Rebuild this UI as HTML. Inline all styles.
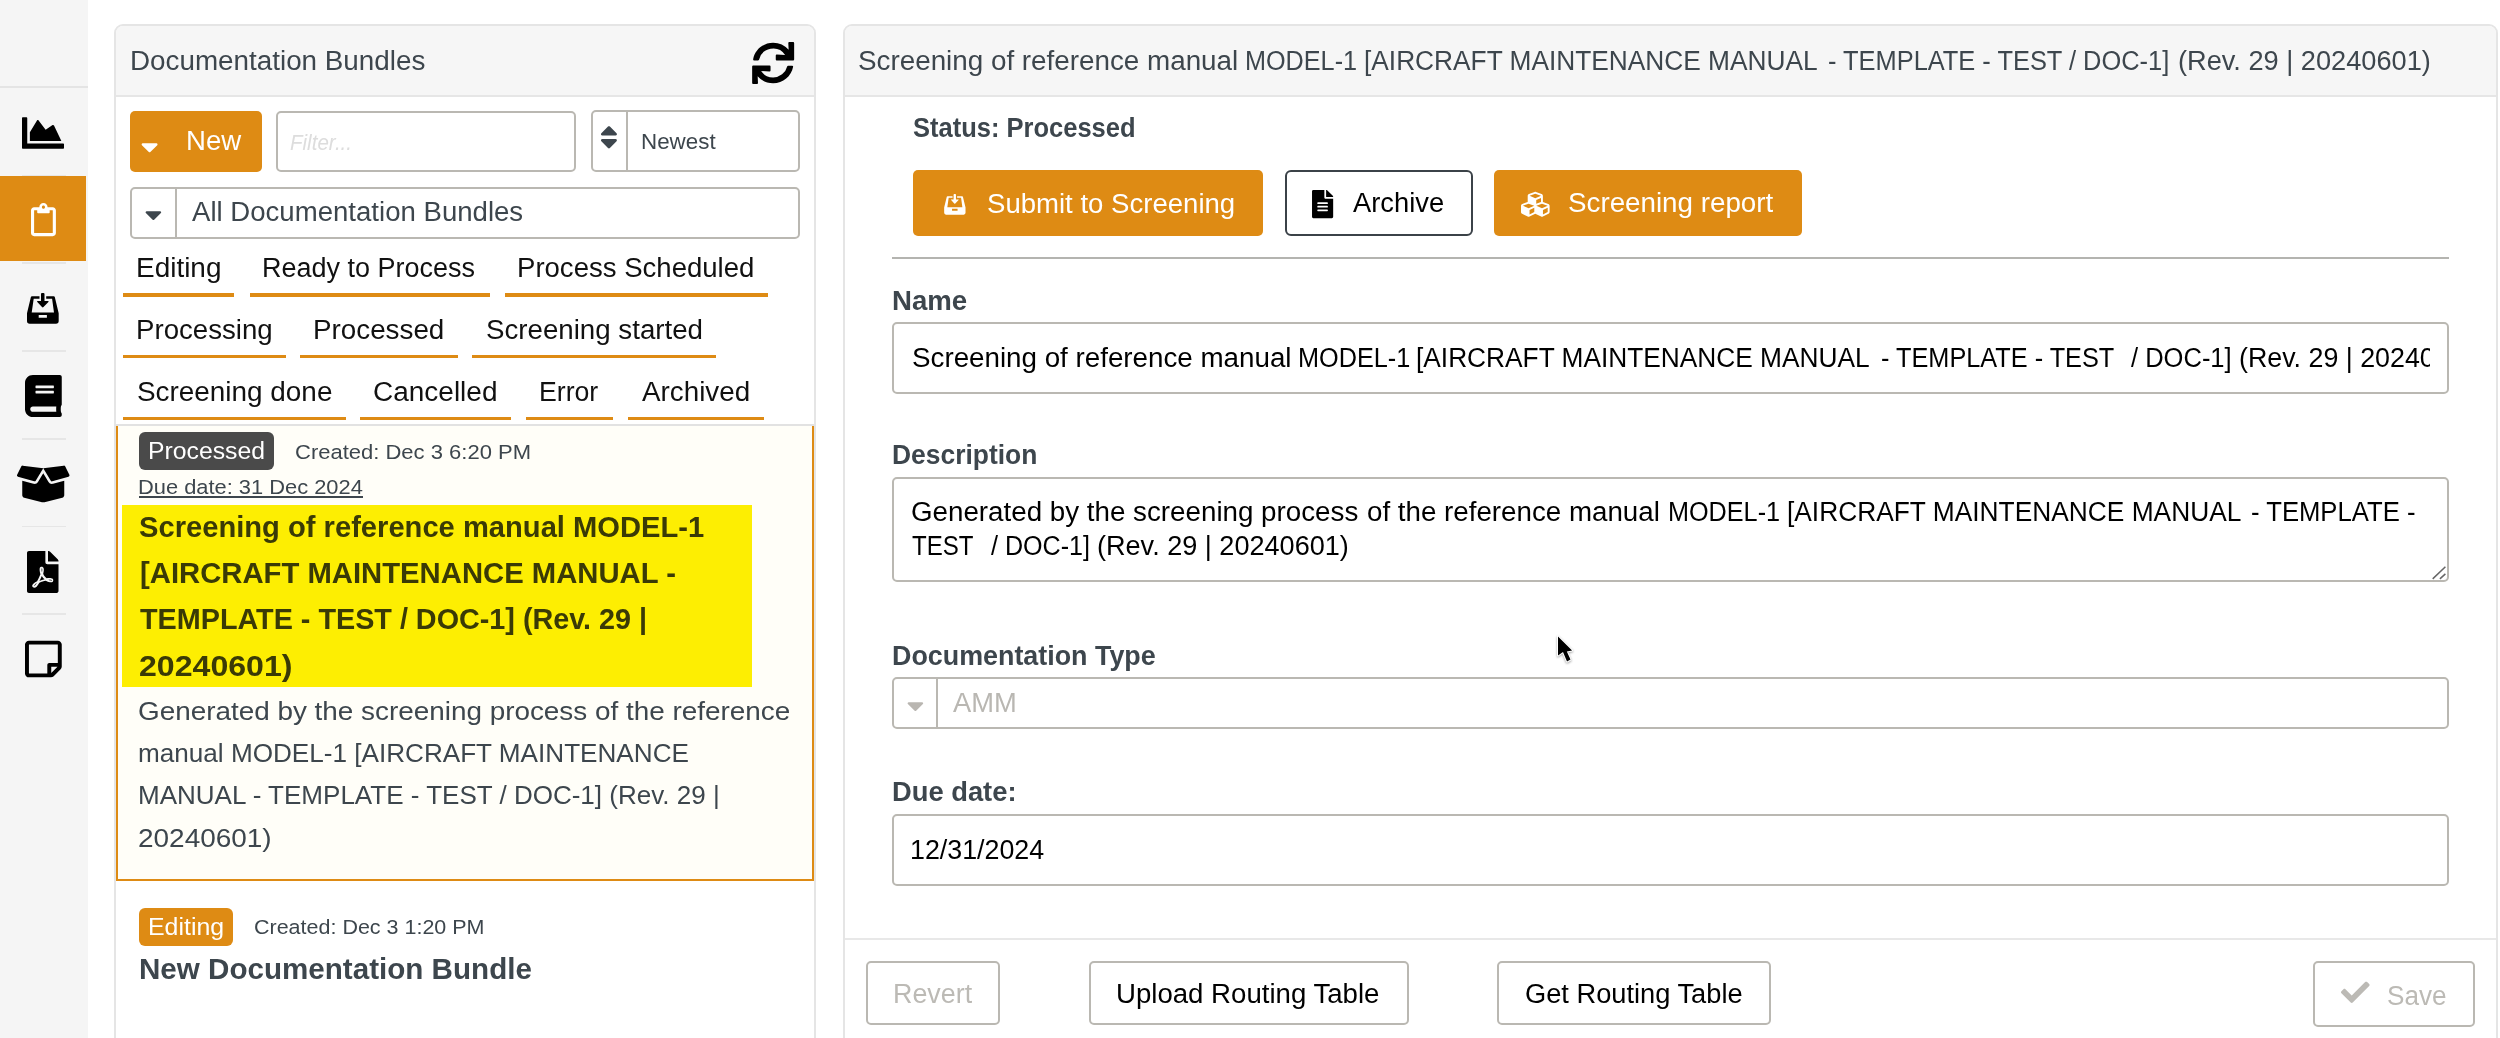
<!DOCTYPE html>
<html lang="en"><head><meta charset="utf-8"><title>Documentation Bundles</title><style>
html,body{margin:0;padding:0;background:#fff}
body{width:2500px;height:1038px;overflow:hidden;font-family:"Liberation Sans",sans-serif}
.root{position:relative;width:2500px;height:1038px;overflow:hidden;background:#fff}
.b{position:absolute}
.i{position:absolute;display:block;overflow:visible}
.t{position:absolute;white-space:pre;line-height:1;transform-origin:0 0;display:block}
.clip{position:absolute;overflow:hidden}
.tx{position:absolute;left:0;top:0;width:2500px;height:1038px;will-change:transform}
</style></head><body>
<div class="root">
<div class="b" style="left:0px;top:0px;width:88.00px;height:1038.00px;background:#f5f5f5"></div>
<div class="b" style="left:0px;top:86px;width:88.00px;height:1.50px;background:#e4e4e4"></div>
<div class="b" style="left:22px;top:174.5px;width:44.00px;height:1.50px;background:#e6e6e6"></div>
<div class="b" style="left:22px;top:262.2px;width:44.00px;height:1.50px;background:#e6e6e6"></div>
<div class="b" style="left:22px;top:350px;width:44.00px;height:1.50px;background:#e6e6e6"></div>
<div class="b" style="left:22px;top:438px;width:44.00px;height:1.50px;background:#e6e6e6"></div>
<div class="b" style="left:22px;top:525.7px;width:44.00px;height:1.50px;background:#e6e6e6"></div>
<div class="b" style="left:22px;top:613.4px;width:44.00px;height:1.50px;background:#e6e6e6"></div>
<div class="b" style="left:0px;top:175.8px;width:86.00px;height:85.60px;background:#de8b14"></div>
<svg class="i" style="left:22px;top:111.55px" width="42" height="42" viewBox="0 0 512 512" ><path fill="#000" d="M500 384c6.600 0 12 5.400 12 12v40c0 6.600-5.400 12-12 12H12c-6.600 0-12-5.400-12-12V76c0-6.600 5.400-12 12-12h40c6.600 0 12 5.400 12 12v308h436zM372.700 159.500L288 216l-85.300-113.700c-5.100-6.800-15.500-6.300-19.900 1L96 248v104h384l-89.900-187.800c-3.200-6.500-11.400-8.700-17.400-4.700z"/></svg>
<svg class="i" style="left:30.6px;top:202.7px" width="24.9" height="33.2" viewBox="0 0 384 512" ><path fill="#fff" d="M336 64h-80c0-35.300-28.700-64-64-64s-64 28.700-64 64H48C21.500 64 0 85.500 0 112v352c0 26.500 21.500 48 48 48h288c26.500 0 48-21.500 48-48V112c0-26.500-21.500-48-48-48zM192 40c13.300 0 24 10.700 24 24s-10.700 24-24 24-24-10.700-24-24 10.700-24 24-24zm144 418c0 3.300-2.700 6-6 6H54c-3.300 0-6-2.700-6-6V118c0-3.300 2.700-6 6-6h42v36c0 6.600 5.400 12 12 12h168c6.600 0 12-5.400 12-12v-36h42c3.300 0 6 2.700 6 6z"/></svg>
<svg class="i" style="left:27.2px;top:292.9px" width="31.7" height="30.7" viewBox="0 0 31.7 30.7"><path fill="#000" fill-rule="evenodd" d="M5 3.200H12.500V5.700H6.700L4.700 19.600H27L25.100 5.700H19.200V3.200H26.700Q27.600 3.200 27.800 4.100L31.700 20.200V28Q31.700 30.700 29 30.700H2.700Q0 30.700 0 28V20.200L3.900 4.100Q4.100 3.200 5 3.200ZM11.700 21.900H19.900V24.800H11.700Z"/><path fill="#000" d="M14 1Q14 0 15 0H16.500Q17.500 0 17.500 1V8.100H21Q22.200 8.100 21.400 9L16.500 14Q15.750 14.800 15 14L10.300 9Q9.500 8.100 10.700 8.100H14Z"/></svg>
<svg class="i" style="left:24.7px;top:374.8px" width="36.75" height="42" viewBox="0 0 448 512" ><path fill="#000" d="M448 360V24c0-13.300-10.700-24-24-24H96C43 0 0 43 0 96v320c0 53 43 96 96 96h328c13.300 0 24-10.700 24-24v-16c0-7.500-3.500-14.300-8.900-18.700-4.200-15.400-4.200-59.300 0-74.700 5.400-4.300 8.900-11.100 8.900-18.600zM128 134c0-3.300 2.700-6 6-6h212c3.300 0 6 2.700 6 6v20c0 3.300-2.700 6-6 6H134c-3.300 0-6-2.700-6-6v-20zm0 64c0-3.300 2.700-6 6-6h212c3.300 0 6 2.700 6 6v20c0 3.300-2.700 6-6 6H134c-3.300 0-6-2.700-6-6v-20zm253.400 250H96c-17.700 0-32-14.300-32-32 0-17.600 14.400-32 32-32h285.400c-1.900 17.100-1.900 46.900 0 64z"/></svg>
<svg class="i" style="left:16.5px;top:462.6px" width="52.5" height="42" viewBox="0 0 640 512" ><path fill="#000" d="M425.700 256c-16.900 0-32.800-9-41.400-23.400L320 126l-64.200 106.600c-8.700 14.500-24.600 23.500-41.500 23.500-4.500 0-9-.6-13.300-1.900L64 215v178c0 14.700 10 27.500 24.200 31l216.200 54.100c10.200 2.500 20.900 2.500 31 0L551.800 424c14.200-3.600 24.200-16.400 24.200-31V215l-137 39.100c-4.300 1.300-8.800 1.900-13.300 1.900zm212.600-112.200L586.800 41c-3.100-6.200-9.800-9.800-16.700-8.900L320 64l91.700 152.100c3.800 6.300 11.400 9.300 18.500 7.300l197.900-56.500c9.900-2.900 14.700-13.900 10.200-23.100zM53.200 41L1.700 143.800c-4.600 9.200.3 20.200 10.100 23l197.900 56.500c7.100 2 14.700-1 18.500-7.300L320 64 69.800 32.100c-6.900-.8-13.500 2.700-16.600 8.900z"/></svg>
<svg class="i" style="left:27.3px;top:550.6px" width="31.5" height="42" viewBox="0 0 384 512" ><path fill="#000" d="M181.900 256.100c-5-16-4.900-46.900-2-46.900 8.400 0 7.600 36.900 2 46.900zm-1.700 47.200c-7.700 20.200-17.300 43.300-28.400 62.700 18.300-7 39-17.200 62.900-21.900-12.700-9.600-24.900-23.400-34.500-40.800zM86.100 428.100c0 .8 13.200-5.400 34.900-40.200-6.700 6.300-29.100 24.500-34.900 40.200zM248 160h136v328c0 13.300-10.700 24-24 24H24c-13.300 0-24-10.700-24-24V24C0 10.700 10.700 0 24 0h200v136c0 13.200 10.800 24 24 24zm-8 171.800c-20-12.200-33.300-29-42.700-53.800 4.500-18.500 11.600-46.600 6.200-64.200-4.700-29.400-42.400-26.500-47.800-6.800-5 18.300-.4 44.100 8.100 77-11.600 27.600-28.700 64.600-40.800 85.800-.1 0-.1.100-.2.100-27.100 13.900-73.600 44.500-54.500 68 5.600 6.900 16 10 21.500 10 17.900 0 35.700-18 61.100-61.800 25.800-8.500 54.100-19.100 79-23.200 21.700 11.800 47.100 19.500 64 19.500 29.200 0 31.200-32 19.700-43.400-13.900-13.600-54.300-9.700-73.600-7.200zM377 105L279 7c-4.500-4.500-10.600-7-17-7h-6v128h128v-6.100c0-6.300-2.500-12.400-7-16.900zm-74.100 255.300c4.100-2.700-2.500-11.900-42.800-9 37.100 15.800 42.800 9 42.800 9z"/></svg>
<svg class="i" style="left:24.7px;top:638.3px" width="36.75" height="42" viewBox="0 0 448 512" ><path fill="#000" d="M448 348.106V80c0-26.510-21.490-48-48-48H48C21.490 32 0 53.490 0 80v351.988c0 26.510 21.490 48 48 48h268.118a48 48 0 0 0 33.941-14.059l83.882-83.882A48 48 0 0 0 448 348.106zm-128 80v-76.118h76.118L320 428.106zM400 80v223.988H296c-13.255 0-24 10.745-24 24v104H48V80h352z"/></svg>
<div class="b" style="left:114px;top:24px;width:702.00px;height:1076.00px;border:2px solid #e5e5e5;border-radius:9px;box-sizing:border-box;background:#fff"></div>
<div class="b" style="left:116px;top:26px;width:698.00px;height:69.00px;background:#f6f6f6;border-radius:7px 7px 0 0"></div>
<div class="b" style="left:116px;top:95px;width:698.00px;height:2.00px;background:#e6e6e6"></div>
<svg class="i" style="left:751.5px;top:42px" width="42.3" height="42" viewBox="0 0 512 512" ><path fill="#000" d="M440.650 12.570l4 82.770A247.160 247.160 0 0 0 255.830 8C134.730 8 33.910 94.920 12.290 209.820A12 12 0 0 0 24.090 224h49.050a12 12 0 0 0 11.670-9.260 175.910 175.910 0 0 1 317-56.940l-101.460-4.860a12 12 0 0 0-12.570 12v47.410a12 12 0 0 0 12 12H500a12 12 0 0 0 12-12V12a12 12 0 0 0-12-12h-47.370a12 12 0 0 0-11.980 12.570zM255.830 432a175.610 175.610 0 0 1-146-77.800l101.800 4.870a12 12 0 0 0 12.570-12v-47.400a12 12 0 0 0-12-12H12a12 12 0 0 0-12 12V500a12 12 0 0 0 12 12h47.350a12 12 0 0 0 12-12.600l-4.150-82.570A247.170 247.170 0 0 0 255.830 504c121.110 0 221.930-86.920 243.550-201.820a12 12 0 0 0-11.800-14.180h-49.050a12 12 0 0 0-11.670 9.260A175.860 175.860 0 0 1 255.830 432z"/></svg>
<div class="b" style="left:130px;top:110.6px;width:131.60px;height:61.40px;background:#de8b14;border-radius:5px"></div>
<svg class="i" style="left:140.6px;top:132.5px" width="17.2" height="27.5" viewBox="0 0 320 512" ><path fill="#fff" d="M31.300 192h257.300c17.800 0 26.700 21.500 14.100 34.100L174.100 354.800c-7.800 7.800-20.500 7.800-28.300 0L17.200 226.100C4.600 213.500 13.500 192 31.300 192z"/></svg>
<div class="b" style="left:275.8px;top:110.6px;width:300.00px;height:61.40px;border:2px solid #bab8b2;border-radius:5px;box-sizing:border-box;background:#fff"></div>
<div class="b" style="left:591px;top:110.4px;width:209.20px;height:61.80px;border:2px solid #bab8b2;border-radius:5px;box-sizing:border-box;background:#fff"></div>
<div class="b" style="left:626px;top:111px;width:2.00px;height:60.00px;background:#bab8b2"></div>
<svg class="i" style="left:599.8px;top:123.2px" width="17.9" height="28.6" viewBox="0 0 320 512" ><path fill="#3d464d" d="M41 288h238c21.400 0 32.100 25.900 17 41L177 448c-9.400 9.400-24.600 9.400-33.900 0L24 329c-15.100-15.100-4.400-41 17-41zm255-105L177 64c-9.400-9.400-24.600-9.400-33.900 0L24 183c-15.100 15.100-4.400 41 17 41h238c21.400 0 32.100-25.900 17-41z"/></svg>
<div class="b" style="left:130px;top:186.5px;width:670.20px;height:52.00px;border:2px solid #bab8b2;border-radius:5px;box-sizing:border-box;background:#fff"></div>
<div class="b" style="left:174.8px;top:187px;width:2.00px;height:50.50px;background:#bab8b2"></div>
<svg class="i" style="left:144.6px;top:200.6px" width="16.8" height="27" viewBox="0 0 320 512" ><path fill="#3d464d" d="M31.300 192h257.300c17.800 0 26.700 21.500 14.100 34.100L174.100 354.800c-7.800 7.800-20.500 7.800-28.300 0L17.200 226.100C4.600 213.500 13.500 192 31.300 192z"/></svg>
<div class="b" style="left:122.9px;top:293.09999999999997px;width:111.60px;height:3.60px;background:#de8b14"></div>
<div class="b" style="left:249.5px;top:293.09999999999997px;width:240.00px;height:3.60px;background:#de8b14"></div>
<div class="b" style="left:504.5px;top:293.09999999999997px;width:263.60px;height:3.60px;background:#de8b14"></div>
<div class="b" style="left:122.9px;top:354.9px;width:162.90px;height:3.60px;background:#de8b14"></div>
<div class="b" style="left:300.0px;top:354.9px;width:157.50px;height:3.60px;background:#de8b14"></div>
<div class="b" style="left:471.9px;top:354.9px;width:244.20px;height:3.60px;background:#de8b14"></div>
<div class="b" style="left:122.9px;top:416.7px;width:223.10px;height:3.60px;background:#de8b14"></div>
<div class="b" style="left:359.7px;top:416.7px;width:151.40px;height:3.60px;background:#de8b14"></div>
<div class="b" style="left:526.1px;top:416.7px;width:86.80px;height:3.60px;background:#de8b14"></div>
<div class="b" style="left:627.5px;top:416.7px;width:136.40px;height:3.60px;background:#de8b14"></div>
<div class="b" style="left:116px;top:424px;width:698.00px;height:1.50px;background:#e2e2e2"></div>
<div class="b" style="left:116px;top:425.5px;width:698.00px;height:455.70px;background:#fffef8;border:2px solid #de8b14;border-top:0;box-sizing:border-box"></div>
<div class="b" style="left:138.6px;top:432px;width:135.00px;height:38.40px;background:#4a4a4a;border-radius:6px"></div>
<div class="b" style="left:139.4px;top:496px;width:223.60px;height:2.00px;background:#3d464d"></div>
<div class="b" style="left:122px;top:504.6px;width:630.40px;height:182.00px;background:#fdee02"></div>
<div class="b" style="left:138.6px;top:908px;width:94.80px;height:37.60px;background:#de8b14;border-radius:6px"></div>
<div class="b" style="left:843px;top:24px;width:1655.00px;height:1076.00px;border:2px solid #e5e5e5;border-radius:9px;box-sizing:border-box;background:#fff"></div>
<div class="b" style="left:845px;top:26px;width:1651.00px;height:69.00px;background:#f6f6f6;border-radius:7px 7px 0 0"></div>
<div class="b" style="left:845px;top:95px;width:1651.00px;height:2.00px;background:#e6e6e6"></div>
<div class="b" style="left:913px;top:170px;width:350.00px;height:66.00px;background:#de8b14;border-radius:5px"></div>
<svg class="i" style="left:944px;top:194.3px" width="21.7" height="20.7" viewBox="0 0 31.7 30.7"><path fill="#fff" fill-rule="evenodd" d="M5 3.200H12.500V5.700H6.700L4.700 19.600H27L25.100 5.700H19.200V3.200H26.700Q27.600 3.200 27.800 4.100L31.700 20.200V28Q31.700 30.700 29 30.700H2.700Q0 30.700 0 28V20.200L3.900 4.100Q4.100 3.200 5 3.200ZM11.700 21.900H19.900V24.800H11.700Z"/><path fill="#fff" d="M14 1Q14 0 15 0H16.500Q17.500 0 17.500 1V8.100H21Q22.200 8.100 21.400 9L16.500 14Q15.750 14.800 15 14L10.300 9Q9.500 8.100 10.700 8.100H14Z"/></svg>
<div class="b" style="left:1285px;top:170px;width:188.00px;height:66.00px;border:2px solid #3b4248;border-radius:6px;box-sizing:border-box;background:#fff"></div>
<svg class="i" style="left:1312.4px;top:190.4px" width="21.2" height="28.2" viewBox="0 0 384 512" ><path fill="#000" d="M224 136V0H24C10.700 0 0 10.700 0 24v464c0 13.300 10.700 24 24 24h336c13.300 0 24-10.700 24-24V160H248c-13.200 0-24-10.800-24-24zm64 236c0 6.600-5.400 12-12 12H108c-6.600 0-12-5.400-12-12v-8c0-6.600 5.400-12 12-12h168c6.600 0 12 5.400 12 12v8zm0-64c0 6.600-5.400 12-12 12H108c-6.600 0-12-5.400-12-12v-8c0-6.600 5.400-12 12-12h168c6.600 0 12 5.400 12 12v8zm0-72v8c0 6.600-5.400 12-12 12H108c-6.600 0-12-5.400-12-12v-8c0-6.600 5.400-12 12-12h168c6.600 0 12 5.400 12 12zm96-114.100v6.100H256V0h6.100c6.400 0 12.500 2.500 17 7l97.900 98c4.500 4.500 7 10.600 7 16.900z"/></svg>
<div class="b" style="left:1494px;top:170px;width:308.00px;height:66.00px;background:#de8b14;border-radius:5px"></div>
<svg class="i" style="left:1521.4px;top:190.2px" width="28.6" height="28.6" viewBox="0 0 512 512" ><path fill="#fff" d="M488.600 250.200L392 214V105.500c0-15-9.300-28.400-23.400-33.700l-100-37.500c-8.100-3.100-17.100-3.100-25.300 0l-100 37.500c-14.100 5.300-23.400 18.700-23.400 33.700V214l-96.600 36.200C9.300 255.500 0 268.900 0 283.900V394c0 13.600 7.700 26.100 19.900 32.200l100 50c10.100 5.100 22.100 5.100 32.200 0l103.900-52 103.900 52c10.100 5.100 22.100 5.100 32.200 0l100-50c12.200-6.100 19.900-18.600 19.900-32.200V283.900c0-15-9.300-28.400-23.400-33.700zM358 214.800l-85 31.900v-68.200l85-37v73.300zM154 104.100l102-38.200 102 38.200v.6l-102 41.400-102-41.400v-.6zm84 291.100l-85 42.500v-79.100l85-38.800v75.400zm0-112l-102 41.400-102-41.400v-.6l102-38.200 102 38.200v.6zm240 112l-85 42.500v-79.100l85-38.800v75.400zm0-112l-102 41.400-102-41.400v-.6l102-38.200 102 38.200v.6z"/></svg>
<div class="b" style="left:892px;top:257px;width:1557.00px;height:2.00px;background:#b4b4b0"></div>
<div class="b" style="left:892px;top:322px;width:1557.00px;height:72.00px;border:2px solid #bab8b2;border-radius:5px;box-sizing:border-box;background:#fff"></div>
<div class="b" style="left:892px;top:477px;width:1557.00px;height:105.00px;border:2px solid #bab8b2;border-radius:5px;box-sizing:border-box;background:#fff"></div>
<svg class="i" style="left:2433px;top:565px" width="14" height="14" viewBox="0 0 14 14"><path d="M12.4 1.8L-0.3 13.9M12.4 8.9L6.9 13.9" stroke="#666" stroke-width="1.5" fill="none"/></svg>
<div class="b" style="left:892px;top:677px;width:1557.00px;height:52.00px;border:2px solid #bab8b2;border-radius:5px;box-sizing:border-box;background:#fff"></div>
<div class="b" style="left:936px;top:679px;width:2.00px;height:48.00px;background:#bab8b2"></div>
<svg class="i" style="left:906.6px;top:691.7px" width="16.8" height="27" viewBox="0 0 320 512" ><path fill="#b9b6b1" d="M31.300 192h257.300c17.800 0 26.700 21.500 14.100 34.100L174.100 354.800c-7.800 7.800-20.500 7.800-28.300 0L17.200 226.100C4.600 213.500 13.500 192 31.300 192z"/></svg>
<div class="b" style="left:892px;top:814px;width:1557.00px;height:72.00px;border:2px solid #bab8b2;border-radius:5px;box-sizing:border-box;background:#fff"></div>
<div class="b" style="left:845px;top:938px;width:1651.00px;height:2.00px;background:#e8e8e8"></div>
<div class="b" style="left:866px;top:961px;width:134.00px;height:64.00px;border:2px solid #bab8b2;border-radius:5px;box-sizing:border-box;background:#fff"></div>
<div class="b" style="left:1089px;top:961px;width:320.00px;height:64.00px;border:2px solid #bab8b2;border-radius:5px;box-sizing:border-box;background:#fff"></div>
<div class="b" style="left:1497px;top:961px;width:274.00px;height:64.00px;border:2px solid #bab8b2;border-radius:5px;box-sizing:border-box;background:#fff"></div>
<div class="b" style="left:2313px;top:961px;width:162.00px;height:66.00px;border:2px solid #bab8b2;border-radius:5px;box-sizing:border-box;background:#fff"></div>
<svg class="i" style="left:2340.7px;top:978px" width="28.6" height="28.6" viewBox="0 0 512 512" ><path fill="#bcbab5" d="M173.898 439.404l-166.400-166.400c-9.997-9.997-9.997-26.206 0-36.204l36.203-36.204c9.997-9.998 26.207-9.998 36.204 0L192 312.690 432.095 72.596c9.997-9.997 26.207-9.997 36.204 0l36.203 36.204c9.997 9.997 9.997 26.206 0 36.204l-294.400 294.401c-9.998 9.997-26.207 9.997-36.204-.001z"/></svg>
<svg class="i" style="left:1553px;top:631px;filter:drop-shadow(0 1px 1px rgba(0,0,0,.35))" width="26" height="36" viewBox="0 0 26 36"><path d="M5 5.4V24.5L10 21L14 30.5L17.5 28.6L13.8 20.4L19.1 19.4Z" fill="#000" stroke="#fff" stroke-width="2" stroke-linejoin="round" paint-order="stroke"/></svg>
<div class="tx">
<span class="t" style="left:129.74px;top:48.00px;font-size:27px;color:#3d464d;transform:scaleX(1.0302);">Documentation Bundles</span>
<span class="t" style="left:185.76px;top:128.00px;font-size:27px;color:#fff;transform:scaleX(1.0217);">New</span>
<span class="t" style="left:289.92px;top:133.00px;font-size:21.5px;color:#dddddd;transform:scaleX(0.9560);font-style:italic;">Filter...</span>
<span class="t" style="left:640.98px;top:132.00px;font-size:21.5px;color:#3d464d;transform:scaleX(1.0405);">Newest</span>
<span class="t" style="left:191.80px;top:199.00px;font-size:27px;color:#3d464d;transform:scaleX(1.0215);">All Documentation Bundles</span>
<span class="t" style="left:135.73px;top:255.00px;font-size:27px;color:#111111;transform:scaleX(1.0349);">Editing</span>
<span class="t" style="left:262.40px;top:255.00px;font-size:27px;color:#111111;transform:scaleX(0.9993);">Ready to Process</span>
<span class="t" style="left:517.36px;top:255.00px;font-size:27px;color:#111111;transform:scaleX(1.0204);">Process Scheduled</span>
<span class="t" style="left:135.75px;top:317.00px;font-size:27px;color:#111111;transform:scaleX(1.0235);">Processing</span>
<span class="t" style="left:312.84px;top:317.00px;font-size:27px;color:#111111;transform:scaleX(1.0294);">Processed</span>
<span class="t" style="left:485.77px;top:317.00px;font-size:27px;color:#111111;transform:scaleX(1.0253);">Screening started</span>
<span class="t" style="left:136.77px;top:379.00px;font-size:27px;color:#111111;transform:scaleX(1.0330);">Screening done</span>
<span class="t" style="left:373.30px;top:379.00px;font-size:27px;color:#111111;transform:scaleX(1.0366);">Cancelled</span>
<span class="t" style="left:539.03px;top:379.00px;font-size:27px;color:#111111;transform:scaleX(0.9869);">Error</span>
<span class="t" style="left:642.40px;top:379.00px;font-size:27px;color:#111111;transform:scaleX(1.0296);">Archived</span>
<span class="t" style="left:147.51px;top:440.00px;font-size:23px;color:#fff;transform:scaleX(1.0774);">Processed</span>
<span class="t" style="left:294.93px;top:442.00px;font-size:20.5px;color:#3d464d;transform:scaleX(1.0730);">Created: Dec 3 6:20 PM</span>
<span class="t" style="left:138.20px;top:477.00px;font-size:20.5px;color:#3d464d;transform:scaleX(1.0663);">Due date: 31 Dec 2024</span>
<span class="t" style="left:139.05px;top:513.00px;font-size:29px;color:#3a3a06;transform:scaleX(1.0049);font-weight:700;">Screening of reference manual MODEL-1</span>
<span class="t" style="left:139.89px;top:559.00px;font-size:29px;color:#3a3a06;transform:scaleX(1.0092);font-weight:700;">[AIRCRAFT MAINTENANCE MANUAL -</span>
<span class="t" style="left:139.55px;top:605.00px;font-size:29px;color:#3a3a06;transform:scaleX(0.9917);font-weight:700;">TEMPLATE - TEST / DOC-1] (Rev. 29 |</span>
<span class="t" style="left:138.69px;top:652.00px;font-size:29px;color:#3a3a06;transform:scaleX(1.1066);font-weight:700;">20240601)</span>
<span class="t" style="left:138.46px;top:698.00px;font-size:26px;color:#3d464d;transform:scaleX(1.0718);">Generated by the screening process of the reference</span>
<span class="t" style="left:138.29px;top:740.00px;font-size:26px;color:#3d464d;transform:scaleX(1.0044);">manual MODEL-1 [AIRCRAFT MAINTENANCE</span>
<span class="t" style="left:137.80px;top:782.00px;font-size:26px;color:#3d464d;transform:scaleX(1.0007);">MANUAL - TEMPLATE - TEST / DOC-1] (Rev. 29 |</span>
<span class="t" style="left:138.46px;top:825.00px;font-size:26px;color:#3d464d;transform:scaleX(1.0750);">20240601)</span>
<span class="t" style="left:147.51px;top:916.00px;font-size:23px;color:#fff;transform:scaleX(1.0820);">Editing</span>
<span class="t" style="left:254.35px;top:917.00px;font-size:20.5px;color:#3d464d;transform:scaleX(1.0481);">Created: Dec 3 1:20 PM</span>
<span class="t" style="left:138.61px;top:955.00px;font-size:29px;color:#3d464d;transform:scaleX(1.0203);font-weight:700;">New Documentation Bundle</span>
<span class="t" style="left:858.37px;top:48.00px;font-size:27px;color:#3d464d;transform:scaleX(1.0298);">Screening of reference manual</span>
<span class="t" style="left:1245.33px;top:48.00px;font-size:27px;color:#3d464d;transform:scaleX(0.9336);">MODEL-1</span>
<span class="t" style="left:1363.90px;top:48.00px;font-size:27px;color:#3d464d;transform:scaleX(0.9732);">[AIRCRAFT MAINTENANCE MANUAL</span>
<span class="t" style="left:1828.26px;top:48.00px;font-size:27px;color:#3d464d;transform:scaleX(0.9411);">- TEMPLATE - TEST / DOC-1]</span>
<span class="t" style="left:2178.09px;top:48.00px;font-size:27px;color:#3d464d;transform:scaleX(1.0065);">(Rev. 29 | 20240601)</span>
<span class="t" style="left:913.29px;top:115.00px;font-size:27px;color:#3d464d;transform:scaleX(0.9447);font-weight:700;">Status: Processed</span>
<span class="t" style="left:986.98px;top:191.00px;font-size:27px;color:#fff;transform:scaleX(1.0207);">Submit to Screening</span>
<span class="t" style="left:1352.80px;top:190.00px;font-size:27px;color:#000;transform:scaleX(1.0122);">Archive</span>
<span class="t" style="left:1567.87px;top:190.00px;font-size:27px;color:#fff;transform:scaleX(1.0281);">Screening report</span>
<span class="t" style="left:891.61px;top:288.00px;font-size:27px;color:#3d464d;transform:scaleX(1.0222);font-weight:700;">Name</span>
<span class="t" style="left:911.57px;top:345.00px;font-size:27px;color:#000;transform:scaleX(1.0279);">Screening of reference manual</span>
<span class="t" style="left:1297.53px;top:345.00px;font-size:27px;color:#000;transform:scaleX(0.9353);">MODEL-1</span>
<span class="t" style="left:1416.30px;top:345.00px;font-size:27px;color:#000;transform:scaleX(0.9732);">[AIRCRAFT MAINTENANCE MANUAL</span>
<span class="t" style="left:1880.66px;top:345.00px;font-size:27px;color:#000;transform:scaleX(0.9367);">- TEMPLATE - TEST</span>
<span class="t" style="left:2131.40px;top:345.00px;font-size:27px;color:#000;transform:scaleX(0.9450);">/ DOC-1]</span>
<div class="clip" style="left:2235px;top:330px;width:194.5px;height:60px"><span class="t" style="left:3.91px;top:15.00px;font-size:27px;color:#000;transform:scaleX(0.9930);">(Rev. 29 | 20240601)</span></div>
<span class="t" style="left:891.69px;top:442.00px;font-size:27px;color:#3d464d;transform:scaleX(0.9788);font-weight:700;">Description</span>
<span class="t" style="left:911.32px;top:499.00px;font-size:27px;color:#000;transform:scaleX(1.0276);">Generated by the screening process</span>
<span class="t" style="left:1366.57px;top:499.00px;font-size:27px;color:#000;transform:scaleX(1.0268);">of the reference manual</span>
<span class="t" style="left:1668.33px;top:499.00px;font-size:27px;color:#000;transform:scaleX(0.9336);">MODEL-1</span>
<span class="t" style="left:1786.89px;top:499.00px;font-size:27px;color:#000;transform:scaleX(0.9749);">[AIRCRAFT MAINTENANCE MANUAL</span>
<span class="t" style="left:2251.05px;top:499.00px;font-size:27px;color:#000;transform:scaleX(0.9503);">- TEMPLATE -</span>
<span class="t" style="left:912.15px;top:533.00px;font-size:27px;color:#000;transform:scaleX(0.8910);">TEST</span>
<span class="t" style="left:991.00px;top:533.00px;font-size:27px;color:#000;transform:scaleX(0.9298);">/ DOC-1]</span>
<span class="t" style="left:1097.30px;top:533.00px;font-size:27px;color:#000;transform:scaleX(1.0025);">(Rev. 29 | 20240601)</span>
<span class="t" style="left:891.66px;top:643.00px;font-size:27px;color:#3d464d;transform:scaleX(0.9950);font-weight:700;">Documentation Type</span>
<span class="t" style="left:953.40px;top:690.00px;font-size:27px;color:#b9b7b2;transform:scaleX(1.0131);">AMM</span>
<span class="t" style="left:891.63px;top:779.00px;font-size:27px;color:#3d464d;transform:scaleX(1.0120);font-weight:700;">Due date:</span>
<span class="t" style="left:910.21px;top:837.00px;font-size:27px;color:#000;transform:scaleX(0.9927);">12/31/2024</span>
<span class="t" style="left:893.01px;top:981.00px;font-size:27px;color:#bcbab5;transform:scaleX(0.9946);">Revert</span>
<span class="t" style="left:1116.36px;top:981.00px;font-size:27px;color:#000;transform:scaleX(1.0221);">Upload Routing Table</span>
<span class="t" style="left:1525.14px;top:981.00px;font-size:27px;color:#000;transform:scaleX(1.0090);">Get Routing Table</span>
<span class="t" style="left:2387.13px;top:983.00px;font-size:27px;color:#bcbab5;transform:scaleX(0.9677);">Save</span>
</div>
</div>
</body></html>
